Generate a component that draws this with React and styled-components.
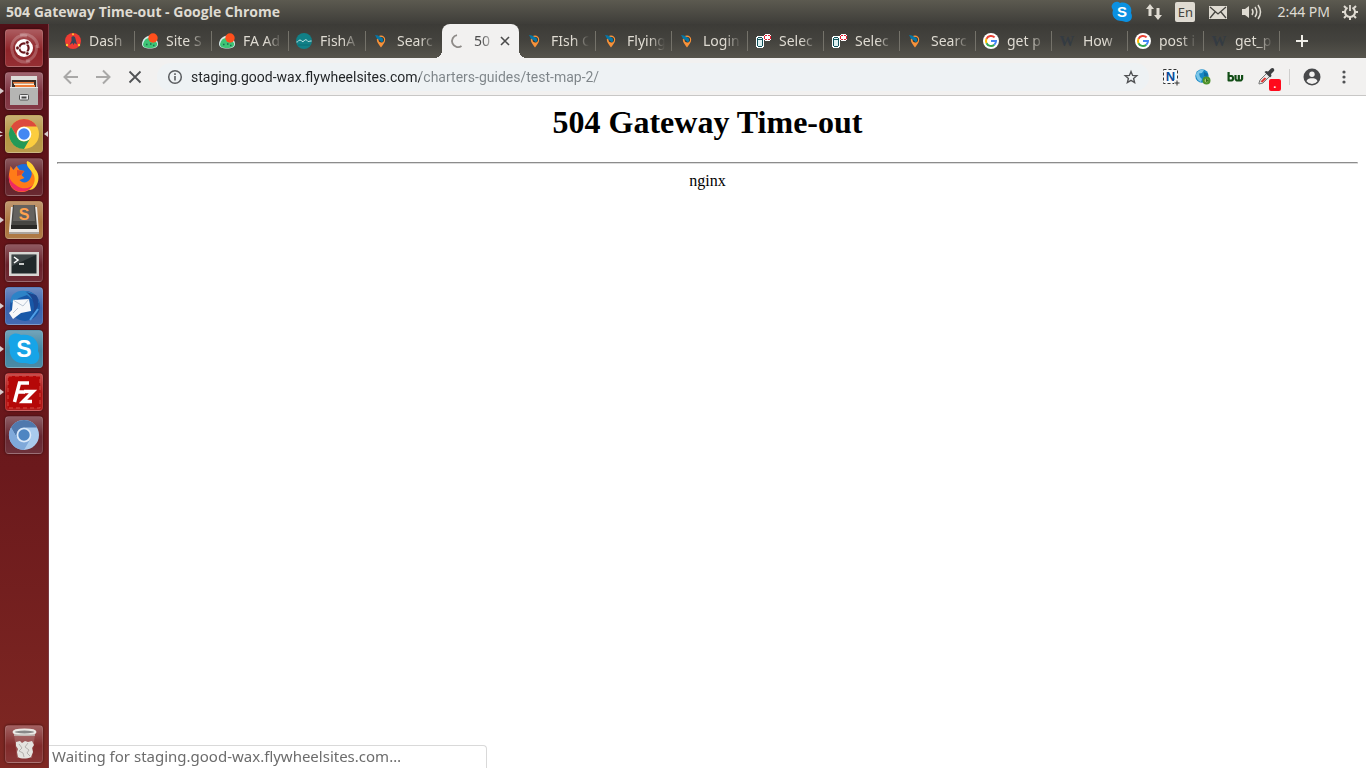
import React from "react";
import styled, { createGlobalStyle, css } from "styled-components";

const GlobalStyle = createGlobalStyle`
  *, *::before, *::after { box-sizing: border-box; }
  body {
    margin: 0;
    font-family: "Noto Sans", "Open Sans", sans-serif;
    font-size: 14px;
    line-height: 20px;
    background: #fff;
  }
  button, input { font: inherit; }
  svg { display: block; flex: none; }
`;

const Desktop = styled.div`
  display: flex;
  flex-direction: column;
  min-height: 100vh;
`;

const TopPanel = styled.header`
  display: flex;
  align-items: center;
  justify-content: space-between;
  height: 24px;
  padding: 0 8px 0 6px;
  color: #dfdbd2;
  background: linear-gradient(#5c5a50, #3e3d39);
`;

const WindowTitle = styled.div`
  font-family: "Open Sans", "Noto Sans", sans-serif;
  font-size: 14px;
  font-weight: 700;
  white-space: nowrap;
`;

const Indicators = styled.div`
  display: flex;
  align-items: center;
  gap: 12px;
`;

const Indicator = styled.button`
  display: flex;
  padding: 0;
  border: 0;
  background: none;
  color: inherit;
  font-size: 14px;
  white-space: nowrap;
`;

const LanguageBadge = styled(Indicator)`
  justify-content: center;
  width: 20px;
  height: 20px;
  border-radius: 2px;
  background: #dfdbd2;
  color: #45443f;
  font-size: 13px;
`;

const Workspace = styled.div`
  display: flex;
  flex: 1;
`;

const Launcher = styled.nav`
  display: flex;
  flex-direction: column;
  flex: none;
  gap: 5px;
  width: 49px;
  padding: 5px 5px 5px 0;
  border-right: 1px solid #7b3a42;
  background: linear-gradient(#501017, #641419 25%, #6b191c 60%, #7f2823);
`;

const LauncherItem = styled.div`
  display: flex;
  align-items: center;
  height: 38px;
  ${(p) => p.$last && css`margin-top: auto;`}
`;

const Running = styled.span`
  width: 5px;
  color: #d8cdce;
`;

const Tile = styled.button`
  display: flex;
  align-items: center;
  justify-content: center;
  width: 38px;
  height: 38px;
  padding: 0;
  border: 1px solid rgba(255, 255, 255, 0.12);
  border-radius: 4px;
  background: linear-gradient(rgba(255, 255, 255, 0.28), rgba(255, 255, 255, 0.03) 55%, rgba(255, 255, 255, 0.08)),
    ${(p) => p.$tint};
  box-shadow: 0 0 2px 1px rgba(0, 0, 0, 0.25);
`;

const Browser = styled.div`
  display: flex;
  flex: 1;
  flex-direction: column;
  min-width: 0;
`;

const TabStrip = styled.div`
  display: flex;
  height: 34px;
  padding-left: 8px;
  background: linear-gradient(#3c3b37, #44433e 50%, #56544c);
`;

const divider = css`
  background: linear-gradient(#74726a, #74726a) 0 50% / 1px 20px no-repeat;
`;

const Tab = styled.div`
  position: relative;
  display: flex;
  align-items: center;
  flex: 1 1 ${(p) => p.$basis}px;
  min-width: 0;
  padding: 0 6px 0 8px;
  color: #dfdbd2;
  ${(p) => p.$divided && divider}
  ${(p) =>
    p.$active &&
    css`
      border-radius: 8px 8px 0 0;
      background: #f2f1f0;
      color: #4c4c4c;
      &::before,
      &::after {
        content: "";
        position: absolute;
        bottom: 0;
        width: 8px;
        height: 8px;
      }
      &::before {
        right: 100%;
        background: radial-gradient(circle at 0 0, transparent 8px, #f2f1f0 8px);
      }
      &::after {
        left: 100%;
        background: radial-gradient(circle at 100% 0, transparent 8px, #f2f1f0 8px);
      }
    `}
`;

const TabButton = styled.button`
  display: flex;
  align-items: center;
  flex: 1;
  gap: 8px;
  min-width: 0;
  padding: 0;
  border: 0;
  background: none;
  color: inherit;
  text-align: left;
`;

const TabLabel = styled.span`
  flex: 1;
  min-width: 0;
  overflow: hidden;
  white-space: nowrap;
  mask-image: linear-gradient(90deg, #000 calc(100% - 16px), transparent);
`;

const CloseButton = styled.button`
  display: flex;
  align-items: center;
  justify-content: center;
  width: 16px;
  height: 16px;
  padding: 0;
  border: 0;
  background: none;
  color: #4c4c4c;
`;

const NewTab = styled.button`
  flex: none;
  width: 87px;
  padding: 0 0 0 16px;
  border: 0;
  color: #f0eee8;
  ${divider}
`;

const Toolbar = styled.div`
  display: flex;
  align-items: center;
  gap: 8px;
  height: 38px;
  padding: 0 8px;
  border-bottom: 1px solid #c8c7c6;
  background: #f2f1f0;
`;

const ButtonGroup = styled.div`
  display: flex;
  gap: 4px;
`;

const IconButton = styled.button`
  position: relative;
  display: flex;
  align-items: center;
  justify-content: center;
  width: 28px;
  height: 28px;
  padding: 0;
  border: 0;
  background: none;
  color: ${(p) => (p.$muted ? "#a9a8a7" : "#505254")};
`;

const ToolbarDivider = styled.span`
  width: 1px;
  height: 16px;
  background: #cfcecd;
`;

const CountBadge = styled.span`
  position: absolute;
  right: 0;
  bottom: 0;
  width: 12px;
  height: 12px;
  border-radius: 2px;
  background: #ff0a1c;
  color: #fff;
  font-size: 10px;
  font-weight: 700;
  line-height: 10px;
`;

const Omnibox = styled.div`
  display: flex;
  align-items: center;
  flex: 1;
  gap: 8px;
  min-width: 0;
  height: 28px;
  padding: 0 4px 0 10px;
  border-radius: 14px;
  background: #eef2f4;
  color: #5a5d60;
`;

const Address = styled.input`
  flex: 1;
  min-width: 0;
  padding: 0;
  border: 0;
  outline: 0;
  font-family: Roboto, "Noto Sans", sans-serif;
  font-size: 14px;
  color: transparent;
  background: linear-gradient(90deg, #202325 229px, #7d8488 229px);
  background-clip: text;
`;

const Page = styled.main`
  flex: 1;
  padding: 8px;
  background: #fff;
  color: #000;
  font-family: "Liberation Serif", serif;
  font-size: 16px;
  line-height: 18px;
  text-align: center;
`;

const Heading = styled.h1`
  margin: 0 0 21px;
  font-size: 32px;
  line-height: 37px;
`;

const Rule = styled.hr`
  margin: 0 0 8px;
  border: 1px solid;
  border-color: #8c8c8c #dcdcdc #dcdcdc #8c8c8c;
`;

const StatusBubble = styled.div`
  position: fixed;
  bottom: 0;
  left: 49px;
  width: 438px;
  height: 23px;
  padding: 0 3px;
  border: 1px solid #d9d9d9;
  border-width: 1px 1px 0 0;
  border-radius: 0 4px 0 0;
  background: #fff;
  color: #6c6c6c;
  font-size: 15px;
  white-space: nowrap;
`;

/* ---------- favicons ---------- */

const Fav = ({ children }) => (
  <svg width="16" height="16" viewBox="0 0 16 16" aria-hidden="true">{children}</svg>
);

const favicons = {
  dash: (
    <Fav>
      <circle cx="8" cy="8" r="8" fill="#ee3b33" />
      <path d="M6.500 4c1-1.500 3.500-1 3.800 1L12 11.500 9.500 10 8.500 12 7.500 10l-3 2L6.500 8z" fill="#394457" />
      <circle cx="8" cy="1.300" r="1" fill="#ffc52e" /><circle cx="2" cy="12" r="1.200" fill="#ffc52e" /><circle cx="14" cy="12" r="1.200" fill="#ffc52e" />
    </Fav>
  ),
  site: (
    <Fav>
      <path d="M0 11C0 6 5 2 9 2.500S16 8 16 11s-3 4.500-8 4.500S0 14 0 11z" fill="#d7ecec" />
      <path d="M1 11C2 7 4 5 7 5s6 3 8 5c1 3-2 5-7 5S1 14 1 11z" fill="#3fc475" />
      <path d="M4 11.500h1.500M8 11h1.500M11 12.500h1.500" stroke="#1c6b51" strokeWidth="1.300" />
      <circle cx="11" cy="5" r="4.700" fill="#ff4f1c" />
    </Fav>
  ),
  wave: (
    <Fav>
      <circle cx="8" cy="8" r="8" fill="#118087" />
      <path d="M0.500 9c2 0 2-2 3.500-2s1.500 2 3 1.500S9 6 10.500 7s1 1.500 2 1.500 1-.5 3-.5" fill="none" stroke="#d3eeee" />
      <path d="M2 12h12" stroke="#0b6c74" />
    </Fav>
  ),
  pin: (
    <Fav>
      <path d="M8 14.500C6 11.500 3.800 9.500 3.800 6.700a4.200 4.200 0 0 1 8.400 0c0 2.800-2.200 4.800-4.200 7.800z" fill="#f7923a" />
      <circle cx="8.300" cy="6.700" r="2.700" fill="#34322e" />
      <path d="M2 2l3 .5L9.500 5c1 1.500 1 3-.5 4.500L5.500 6.500 4 5.800z" fill="#0876a5" />
    </Fav>
  ),
  jar: (
    <Fav>
      <g shapeRendering="crispEdges">
        <path d="M2 3h6v1h1v10H8v1H2v-1H1V4h1z" fill="#fff" />
        <path d="M3 4h4v1h1v8H7v1H3v-1H2V5h1z" fill="#14555d" />
        <path d="M3 5h4v1H3zM3 7h4v6H3z" fill="#dff0f0" />
        <path d="M9 2h1V1h5v1h1v5h-1v1h-5V7H9V6H8V3h1z" fill="#fff" />
        <path d="M10 2h2v1h-2zM9 3h1v3H9zM10 6h2v1h-2zM13 2h2v1h-2zM15 3h1v3h-1zM13 6h2v1h-2z" fill="#e12034" />
      </g>
    </Fav>
  ),
  google: (
    <Fav>
      <circle cx="8" cy="8" r="8" fill="#fff" />
      <path d="M11.600 4.400A5 5 0 0 0 3.500 5.800" fill="none" stroke="#ea4335" strokeWidth="2" />
      <path d="M3.500 5.800a5 5 0 0 0 0 4.400" fill="none" stroke="#fbbc05" strokeWidth="2" />
      <path d="M3.500 10.200a5 5 0 0 0 7.800 1.500" fill="none" stroke="#34a853" strokeWidth="2" />
      <path d="M8 8h5a5 5 0 0 1-1.700 3.700" fill="none" stroke="#4285f4" strokeWidth="2" />
    </Fav>
  ),
  w: (
    <Fav>
      <text x="8" y="13" textAnchor="middle" fontFamily="Liberation Serif, serif" fontSize="15" fontWeight="700" fill="#343b42">W</text>
    </Fav>
  ),
  loading: (
    <Fav>
      <path d="M7 2.200A6 6 0 1 0 11.500 13" fill="none" stroke="#8e8b88" strokeWidth="1.800" />
    </Fav>
  ),
};

const tabs = [
  ["dash", "Dash"], ["site", "Site S"], ["site", "FA Ad"], ["wave", "FishA"], ["pin", "Searc"],
  ["loading", "50"],
  ["pin", "FIsh C"], ["pin", "Flying"], ["pin", "Login"], ["jar", "Selec"], ["jar", "Selec"],
  ["pin", "Searc"], ["google", "get p"], ["w", "How"], ["google", "post i"], ["w", "get_p"],
];
const ACTIVE = 5;

/* ---------- launcher icons ---------- */

const App36 = ({ children }) => (
  <svg width="36" height="36" viewBox="0 0 36 36" aria-hidden="true">{children}</svg>
);

const ChromeShape = ({ r, y, g, b, ring, gap }) => (
  <>
    <circle cx="18" cy="18" r="15" fill={y} />
    <path d="M5 10.500A15 15 0 0 1 31 10.500H18a7.500 7.500 0 0 0-6.500 11.200z" fill={r} />
    <path d="M5 10.500a15 15 0 0 0 13 22.500l6.500-11.300a7.500 7.500 0 0 1-13 0z" fill={g} />
    <circle cx="18" cy="18" r="7.300" fill={ring} />
    <circle cx="18" cy="18" r={gap} fill={b} />
  </>
);

const launcher = [
  { name: "Search your computer", tint: "#8c1d22", icon: (
    <App36>
      <g fill="none" stroke="#fff" strokeOpacity=".22" strokeWidth="3">
        <path d="M6 20a12 12 0 0 1 15-14" /><path d="M14 5a14 14 0 0 1 18 13" /><path d="M30 15a13 13 0 0 1-10 16" /><path d="M24 31A13 13 0 0 1 6 20" />
      </g>
      <circle cx="18" cy="18" r="9" fill="#fff" />
      <circle cx="18" cy="18" r="4.600" fill="none" stroke="#68171c" strokeWidth="2.200" />
      <path d="M18 18L10 18M18 18l4-7M18 18l4 7" stroke="#fff" strokeWidth="1.200" />
      <circle cx="11.500" cy="18" r="1.900" fill="#68171c" stroke="#fff" strokeWidth=".7" />
      <circle cx="21.300" cy="12.400" r="1.900" fill="#68171c" stroke="#fff" strokeWidth=".7" />
      <circle cx="21.300" cy="23.600" r="1.900" fill="#68171c" stroke="#fff" strokeWidth=".7" />
    </App36>) },
  { name: "Files", tint: "#7a2a38", run: 1, icon: (
    <App36>
      <path d="M5 3h26l1 29H4z" fill="#c9c9c7" />
      <path d="M5 3h26v4H5z" fill="#deddda" />
      <path d="M6 7h24v7H6z" fill="#3b2c26" />
      <path d="M7 9h21v1.500H7zM9 12h20v2H9z" fill="#ef7c37" /><path d="M8 10.500h20V12H8z" fill="#fff0d8" />
      <path d="M4 14h28v18H4z" fill="#b5b5b3" /><path d="M4 14h28v1H4z" fill="#e9e9e7" />
      <rect x="13.500" y="21.500" width="9" height="5.500" rx="1" fill="#eee" stroke="#555" /><path d="M15.500 24.500h5" stroke="#444" strokeWidth="2" />
    </App36>) },
  { name: "Google Chrome", tint: "#b3923c", run: 2, focus: true, icon: (
    <App36><ChromeShape r="#dc4a3d" y="#fccd3f" g="#239957" b="#4587f2" ring="#fff" gap="5.700" /></App36>) },
  { name: "Firefox", tint: "#5d1820", icon: (
    <App36>
      <circle cx="18" cy="18" r="13" fill="#1b6edb" />
      <path d="M3 15L4.500 7l3 4 3-4 3 4 5 1-3 4 3 3-5 2c3 4 9 3 11-2 3-5 0-9-3-12l-1-4c4 1 9 7 10 12 2 10-6 18-15 18S2 26 3 15z" fill="#ff7b18" />
      <path d="M3 15c0 6 4 9 8 12 6 4 14 3 19-4-4 8-13 12-21 8C4 28 2 21 3 15z" fill="#ef2a62" />
      <path d="M21 2c4 1 7 5 8 8 5 5 4 13 1 17-2 3-5 4-7 4 7-6 7-13 3-18-3-4-6-6-5-11z" fill="#ffd22d" />
      <path d="M11 11l7 1-3 4-4 1z" fill="#e34d26" />
    </App36>) },
  { name: "Sublime Text", tint: "#a86f37", run: 1, icon: (
    <App36>
      <path d="M5 5h26l2 24v3H3v-3z" fill="#ece9e5" />
      <path d="M3 30h30v2H3z" fill="#aaa5a0" />
      <path d="M7 3h22l2 22H5z" fill="#474643" /><path d="M8 3h20l1 16H7z" fill="#64625f" />
      <path d="M5 23h26v4H5z" fill="#292826" />
      <text x="18" y="18" textAnchor="middle" fontFamily="Liberation Sans, sans-serif" fontSize="16" fontWeight="700" fill="#ffa14d">S</text>
    </App36>) },
  { name: "Terminal", tint: "#641a24", icon: (
    <App36>
      <path d="M3 7h30v24H3z" fill="#d7d6d3" /><path d="M5.500 9.500h25v19h-25z" fill="#20282a" />
      <path d="M6 10h24l-24 11z" fill="#3d4446" />
      <path d="M8 12l4 3-4 3M13 19h5" fill="none" stroke="#fff" strokeWidth="1.500" />
    </App36>) },
  { name: "Thunderbird", tint: "#345eaa", run: 1, icon: (
    <App36>
      <circle cx="19" cy="18" r="15" fill="#1858a8" />
      <path d="M5 15C3 7 11 2 19 3c8 1 13 5 14 12l-6-3-6-5-8 3z" fill="#2d83c7" />
      <path d="M20 4c6 4 10 12 7 22 6-6 7-14 3-19z" fill="#1d4690" />
      <path d="M24 32l8-11" fill="none" stroke="#4f9ee5" strokeWidth="2" />
      <path d="M7 12l16-1 2 12-10 2-8 6-4-6 3-3z" fill="#f7f8fa" />
      <path d="M7 12l10 6 6-7M7 25l5-5" fill="none" stroke="#b9c5d4" />
    </App36>) },
  { name: "Skype", tint: "#3b819f", run: 1, icon: (
    <App36>
      <path d="M4 5c5-4 9-2 11-1 10-2 19 5 17 16 3 5 1 14-8 13-3-1-4-1-6-1C8 33 2 24 4 16 2 12 2 8 4 5z" fill="#17a4e7" />
      <text x="18" y="26" textAnchor="middle" fontFamily="Liberation Sans, sans-serif" fontSize="23" fontWeight="700" fill="#fff">S</text>
    </App36>) },
  { name: "FileZilla", tint: "#ad0909", run: 1, icon: (
    <App36>
      <rect x="2" y="2" width="32" height="32" fill="#b50808" stroke="#d94b43" strokeDasharray="4 3" />
      <g fill="none" stroke="#fff" strokeWidth="3.500"><path d="M8.500 28l5-19H23M11 18h8" /><path d="M18 17.500h9L17 27.500h9" /></g>
    </App36>) },
  { name: "Chromium", tint: "#61202a", icon: (
    <App36><ChromeShape r="#5079ad" y="#a9cbed" g="#7fa9da" b="#4e85c2" ring="#dceafa" gap="5.700" /></App36>) },
  { name: "Trash", tint: "#7d2424", last: true, icon: (
    <App36>
      <path d="M8 8h21l-3 24H11z" fill="#d9b8b6" fillOpacity=".25" />
      <path d="M10 16l4-1 2 2 3-2 3 1 4-1 2 4-2 3 1 4-2 5c-4 2-10 2-13 0l-1-5 1-3-2-3z" fill="#e4e3df" />
      <path d="M13 18l3 4-3 3 4 2 1 4M22 17l-3 4 4 3-2 3 3 3" fill="none" stroke="#b4b1ad" />
      <ellipse cx="18.500" cy="6" rx="11" ry="2.400" fill="#888" stroke="#ecebe7" strokeWidth="2" />
      <path d="M8 9h21" stroke="#c6c3bf" strokeWidth="1.500" />
    </App36>) },
];

const RunMarks = ({ count }) => (
  <Running>
    {count > 0 && (
      <svg width="5" height="8" viewBox="0 0 5 8" fill="currentColor" aria-hidden="true">
        {count === 1 ? <path d="M0 1l4 3-4 3z" /> : <path d="M0 1l3 2H0zM0 5h3L0 7z" />}
      </svg>
    )}
  </Running>
);

const FocusMark = () => (
  <svg width="5" height="8" viewBox="0 0 5 8" fill="#d8cdce" aria-hidden="true"><path d="M5 1L1 4l4 3z" /></svg>
);

export default function App() {
  return (
    <>
      <GlobalStyle />
      <Desktop>
        <TopPanel>
          <WindowTitle>504 Gateway Time-out - Google Chrome</WindowTitle>
          <Indicators>
            <Indicator aria-label="Skype">
              <svg width="22" height="22" viewBox="0 0 22 22">
                <path d="M1 4C3 0 7 0 9 2c7-2 13 4 11 10 2 3 1 9-5 9l-4-1C4 20 0 15 2 9 1 7 0 6 1 4z" fill="#0b91e2" />
                <text x="11" y="16" textAnchor="middle" fontFamily="Liberation Sans, sans-serif" fontSize="15" fontWeight="700" fill="#fff">S</text>
              </svg>
            </Indicator>
            <Indicator aria-label="Network">
              <svg width="18" height="18" viewBox="0 0 18 18" fill="currentColor">
                <path d="M5 1l4 5H6.500v7h-3V6H1zM13 17l-4-5h2.500V5h3v7H17z" />
              </svg>
            </Indicator>
            <LanguageBadge>En</LanguageBadge>
            <Indicator aria-label="Messages">
              <svg width="22" height="20" viewBox="-1 0 22 20">
                <path d="M1 4h18v13H1z" fill="#dfdbd2" />
                <path d="M2 5l8 7 8-7M2 16l5-6M18 16l-5-6" fill="none" stroke="#45443f" strokeWidth="1.300" />
              </svg>
            </Indicator>
            <Indicator aria-label="Sound">
              <svg width="24" height="18" viewBox="0 0 24 18">
                <path d="M1 6h3l4-3v12l-4-3H1z" fill="#dfdbd2" />
                <path d="M11 6q2 3 0 6M14 4q3.500 5 0 10M17 2q5 7 0 14" fill="none" stroke="#dfdbd2" strokeWidth="1.500" />
              </svg>
            </Indicator>
            <Indicator>2:44 PM</Indicator>
            <Indicator aria-label="System">
              <svg width="16" height="18" viewBox="0 0 16 18">
                <g fill="none" stroke="#dfdbd2">
                  <path d="M5.500 4.700a5 5 0 1 0 5 0" strokeWidth="2" />
                  <path d="M8 2v6" strokeWidth="1.800" />
                  <path d="M8 14v3M0 9h3M13 9h3M2 3l2 2M14 3l-2 2M2 15l2-2M14 15l-2-2" strokeWidth="2" />
                </g>
              </svg>
            </Indicator>
          </Indicators>
        </TopPanel>

        <Workspace>
          <Launcher aria-label="Launcher">
            {launcher.map((item) => (
              <LauncherItem key={item.name} $last={item.last}>
                <RunMarks count={item.run} />
                <Tile $tint={item.tint} aria-label={item.name}>{item.icon}</Tile>
                {item.focus && <FocusMark />}
              </LauncherItem>
            ))}
          </Launcher>

          <Browser>
            <TabStrip>
              {tabs.map(([icon, label], i) => (
                <Tab
                  key={i}
                  $basis={i <= ACTIVE ? 77 : 76}
                  $active={i === ACTIVE}
                  $divided={i > 0 && i !== ACTIVE && i !== ACTIVE + 1}
                >
                  <TabButton>
                    {favicons[icon]}
                    <TabLabel>{label}</TabLabel>
                  </TabButton>
                  {i === ACTIVE && (
                    <CloseButton aria-label="Close tab">
                      <svg width="10" height="10" viewBox="0 0 10 10"><path d="M1 1l8 8M9 1L1 9" stroke="currentColor" strokeWidth="1.600" /></svg>
                    </CloseButton>
                  )}
                </Tab>
              ))}
              <NewTab aria-label="New tab">
                <svg width="14" height="14" viewBox="0 0 14 14"><path d="M7 1v12M1 7h12" stroke="currentColor" strokeWidth="2" /></svg>
              </NewTab>
            </TabStrip>

            <Toolbar>
              <ButtonGroup>
                <IconButton $muted aria-label="Back">
                  <svg width="16" height="16" viewBox="0 0 16 16" fill="none" stroke="currentColor" strokeWidth="2"><path d="M15 8H2M8 1.500L1.500 8 8 14.500" /></svg>
                </IconButton>
                <IconButton $muted aria-label="Forward">
                  <svg width="16" height="16" viewBox="0 0 16 16" fill="none" stroke="currentColor" strokeWidth="2"><path d="M1 8h13M8 1.500L14.500 8 8 14.500" /></svg>
                </IconButton>
                <IconButton aria-label="Stop">
                  <svg width="14" height="14" viewBox="0 0 14 14" stroke="currentColor" strokeWidth="1.800"><path d="M1.500 1.500l11 11M12.500 1.500l-11 11" /></svg>
                </IconButton>
              </ButtonGroup>

              <Omnibox>
                <svg width="16" height="16" viewBox="0 0 16 16" fill="none" stroke="currentColor" strokeWidth="1.500">
                  <circle cx="8" cy="8" r="6.300" /><path d="M8 7v4.500M8 4.300v1.600" strokeWidth="1.600" />
                </svg>
                <Address aria-label="Address" defaultValue="staging.good-wax.flywheelsites.com/charters-guides/test-map-2/" />
                <IconButton aria-label="Bookmark this page">
                  <svg width="16" height="16" viewBox="0 0 16 16" fill="none" stroke="currentColor" strokeWidth="1.400">
                    <path d="M8 2.500l1.600 3.900 4.200.3-3.200 2.700 1 4.100L8 11.300l-3.600 2.200 1-4.100L2.200 6.700l4.200-.3z" />
                  </svg>
                </IconButton>
              </Omnibox>

              <ButtonGroup>
                <IconButton aria-label="Nimbus capture">
                  <svg width="18" height="18" viewBox="0 0 18 18">
                    <path d="M1.500 1.500h14v14h-14z" fill="#f7f9fb" stroke="#333" strokeDasharray="3 2" />
                    <text x="8.500" y="13" textAnchor="middle" fontFamily="Liberation Sans, sans-serif" fontSize="13" fontWeight="700" fill="#0a4d9b">N</text>
                    <path d="M12 12h6v6h-6z" fill="#f2f1f0" /><path d="M15 12.500v5M12.500 15h5" stroke="#333" />
                  </svg>
                </IconButton>
                <IconButton aria-label="Web globe">
                  <svg width="16" height="16" viewBox="0 0 16 16">
                    <circle cx="7" cy="7" r="6.700" fill="#1787c4" />
                    <path d="M1 5c3-5 7-5 8-4L7 4 4 4.500 5 8l2 2-1 3C3 12 1 9 1 5z" fill="#7bc6e8" />
                    <path d="M9 3l4 2-1 3-3-1z" fill="#106a9f" />
                    <circle cx="11.500" cy="11.500" r="3" fill="#a5c672" stroke="#4c922a" strokeWidth="2" />
                    <path d="M11 9l3 3-3 1z" fill="#2e701c" />
                  </svg>
                </IconButton>
                <IconButton aria-label="BuiltWith">
                  <svg width="18" height="16" viewBox="0 0 18 16">
                    <g fill="none" stroke="#124d16" strokeWidth="2.200" strokeLinejoin="round">
                      <path d="M2.600 3v8.500H5.500q1.500 0 1.500-2.200T5.500 7H3" /><path d="M9.500 6v4l1 1.500h4.600l1-1.500V6M12.800 6v5" />
                    </g>
                  </svg>
                </IconButton>
                <IconButton aria-label="Colour picker">
                  <svg width="20" height="20" viewBox="0 0 20 20">
                    <path d="M2 16l1-3 7-7 3 3-7 7-4 1z" fill="#e9e9e9" stroke="#777" />
                    <path d="M3.500 14.500l4-4 2 1-4 4z" fill="#dc3834" />
                    <path d="M9 4l2 .5L14 1.500c2-1.500 4 .5 3 2.500l-3 3 .5 2-1.500 1.500L7.500 5z" fill="#3d3f41" />
                  </svg>
                  <CountBadge>.</CountBadge>
                </IconButton>
              </ButtonGroup>
              <ToolbarDivider />
              <ButtonGroup>
                <IconButton aria-label="Profile">
                  <svg width="18" height="18" viewBox="0 0 18 18">
                    <circle cx="9" cy="9" r="8.500" fill="#48494b" />
                    <circle cx="9" cy="6.200" r="2.700" fill="#f2f1f0" />
                    <path d="M3.500 13.300C4 10.700 7 10.300 9 10.300s5 .4 5.500 3A6.800 6.800 0 0 1 9 16a6.800 6.800 0 0 1-5.500-2.700z" fill="#f2f1f0" />
                  </svg>
                </IconButton>
                <IconButton aria-label="Menu">
                  <svg width="16" height="16" viewBox="0 0 16 16" fill="currentColor">
                    <circle cx="8" cy="3" r="1.600" /><circle cx="8" cy="8" r="1.600" /><circle cx="8" cy="13" r="1.600" />
                  </svg>
                </IconButton>
              </ButtonGroup>
            </Toolbar>

            <Page>
              <Heading>504 Gateway Time-out</Heading>
              <Rule />
              nginx
            </Page>
          </Browser>
        </Workspace>
        <StatusBubble role="status">Waiting for staging.good-wax.flywheelsites.com…</StatusBubble>
      </Desktop>
    </>
  );
}
